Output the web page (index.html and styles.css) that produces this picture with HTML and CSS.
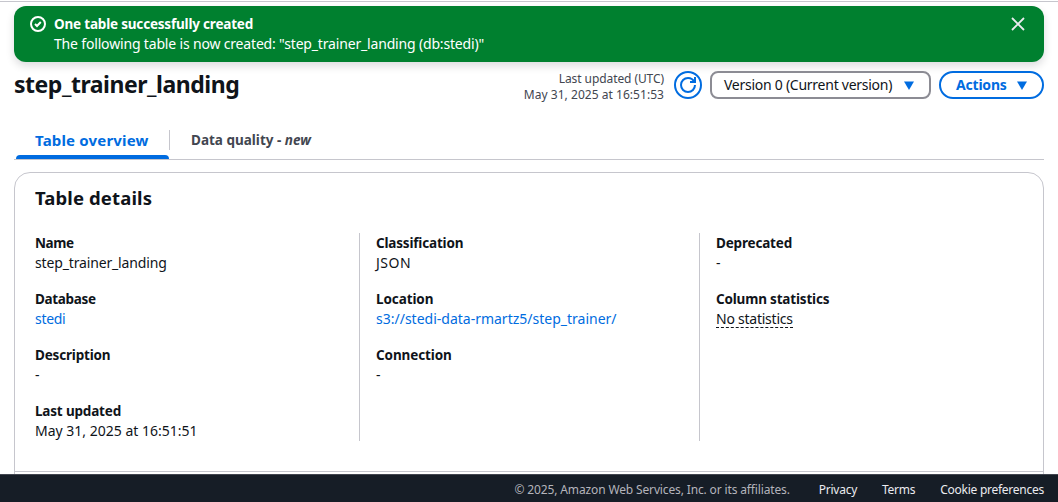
FILE: index.html
```html
<!DOCTYPE html>
<html lang="en">
<head>
<meta charset="utf-8">
<title>step_trainer_landing</title>
<link rel="stylesheet" href="styles.css">
</head>
<body>
<div class="app">
  <main class="main">
    <div class="flash">
      <svg class="flash-icon" viewBox="0 0 16 16"><circle cx="8" cy="8" r="7"/><path d="M5 8l2 2 3.8-4"/></svg>
      <div class="flash-text">
        <div><span class="flash-title">One table successfully created</span></div>
        <div><span class="flash-body">The following table is now created: "step_trainer_landing (db:stedi)"</span></div>
      </div>
      <svg class="flash-close" viewBox="0 0 16 16"><path d="M2 2l12 12M14 2L2 14"/></svg>
    </div>
    <header class="header">
      <h1 class="title">step_trainer_landing</h1>
      <div class="updated">
        <div class="updated-label">Last updated (UTC)</div>
        <div class="updated-time">May 31, 2025 at 16:51:53</div>
      </div>
      <button class="refresh" aria-label="Refresh"><svg viewBox="0 0 16 16"><path d="M15 8c0 3.87-3.13 7-7 7s-7-3.13-7-7 3.13-7 7-7c2.79 0 5.2 1.63 6.33 4"/><path d="M10 5h5V0"/></svg></button>
      <button class="select"><span class="select-text">Version 0 (Current version)</span><svg class="caret" viewBox="0 0 10 9"><path d="M0 .5h10L5 9z"/></svg></button>
      <button class="actions"><span class="actions-text">Actions</span><svg class="caret" viewBox="0 0 10 9"><path d="M0 .5h10L5 9z"/></svg></button>
    </header>
    <nav class="tabs">
      <a class="tab tab-active">Table overview</a>
      <a class="tab">Data quality - <i>new</i></a>
    </nav>
    <section class="card">
      <h2 class="card-title">Table details</h2>
      <div class="columns">
        <dl class="column">
          <div><dt class="k-name">Name</dt><dd class="v-name">step_trainer_landing</dd></div>
          <div><dt class="k-db">Database</dt><dd><a class="link v-db">stedi</a></dd></div>
          <div><dt>Description</dt><dd>-</dd></div>
          <div><dt>Last updated</dt><dd>May 31, 2025 at 16:51:51</dd></div>
        </dl>
        <dl class="column">
          <div><dt>Classification</dt><dd class="v-class">JSON</dd></div>
          <div><dt class="k-loc">Location</dt><dd><a class="link">s3://stedi-data-rmartz5/step_trainer/</a></dd></div>
          <div><dt class="k-conn">Connection</dt><dd>-</dd></div>
        </dl>
        <dl class="column">
          <div><dt>Deprecated</dt><dd>-</dd></div>
          <div><dt>Column statistics</dt><dd><span class="dashed">No statistics</span></dd></div>
        </dl>
      </div>
      <div class="card-footer"></div>
    </section>
  </main>
  <footer class="footer">
    <span class="copyright">© 2025, Amazon Web Services, Inc. or its affiliates.</span>
    <a>Privacy</a>
    <a>Terms</a>
    <a>Cookie preferences</a>
  </footer>
</div>
</body>
</html>
```
FILE: styles.css
```css
* { box-sizing: border-box; }
body {
  margin: 0;
  background: #fff;
  color: #0f141a;
  font: 14px/20px "Noto Sans", "Open Sans", sans-serif;
  white-space: nowrap;
}
.app { height: 502px; display: flex; flex-direction: column; overflow: hidden; padding-top: 1px; }
.main { flex: 1; min-height: 0; overflow: hidden; border-top: 1px solid #c6c6cd; padding: 4px 14px 0; }
.flash {
  display: flex; height: 56px; padding: 8px 18px 8px 16px;
  border-radius: 12px; background: #00802f; color: #fff;
  box-shadow: 0 4px 8px rgba(0, 7, 22, .14);
}
.flash-icon { width: 16px; height: 16px; margin: 2px 8px 0 0; fill: none; stroke: #fff; stroke-width: 2; }
.flash-text { flex: 1; }
.flash-title { font-weight: 700; font-size: 13.5px; letter-spacing: -.19px; }
.flash-body { letter-spacing: -.17px; }
.flash-close { width: 16px; height: 16px; margin-top: 2px; fill: none; stroke: #ebebf0; stroke-width: 1.8; }
.header { display: flex; align-items: flex-start; margin-top: 9px; height: 59px; }
.title { flex: 1; margin: 0; font-size: 23px; line-height: 27px; letter-spacing: -.47px; }
.updated { margin: 0 10px 0 0; font-size: 12px; line-height: 16px; color: #424650; text-align: right; }
.updated-label { letter-spacing: -.08px; }
.updated-time { letter-spacing: .04px; }
button { height: 28px; background: #fff; font: inherit; color: inherit; display: flex; align-items: center; padding: 0; }
.refresh { width: 28px; border: 2px solid #006ce0; border-radius: 50%; justify-content: center; }
.refresh svg { width: 16px; height: 16px; fill: none; stroke: #006ce0; stroke-width: 2; }
.select { width: 221px; margin: 0 8px; padding: 0 15px 0 12px; border: 2px solid #8c8c94; border-radius: 8px; justify-content: space-between; }
.select-text { letter-spacing: -.26px; }
.actions { width: 105px; padding: 0 15px; border: 2px solid #006ce0; border-radius: 14px; justify-content: space-between; color: #006ce0; font-weight: 700; }
.actions-text { letter-spacing: -.2px; }
.caret { width: 10px; height: 9px; fill: #006ce0; }
.tabs { display: flex; height: 30px; border-bottom: 1px solid #c6c6cd; padding-left: 2px; font-weight: 700; font-size: 13.5px; color: #424650; }
.tab { height: 20px; padding: 0 21px; }
.tab-active { width: 154px; padding: 0 0 0 19px; height: 29px; color: #006ce0; font-size: 15px; letter-spacing: .18px; border-right: 1px solid transparent; background: linear-gradient(#c6c6cd, #c6c6cd) right top / 1px 20px no-repeat border-box; }
.tab-active::after { content: ""; display: block; height: 4px; margin: 5px 0 0 -19px; border-radius: 4px 4px 0 0; background: #006ce0; }
.card { margin-top: 12px; height: 400px; border: 1px solid #c6c6cd; border-radius: 16px; padding-top: 13px; }
.card-title { margin: 0 20px; font-size: 18.5px; line-height: 24px; letter-spacing: .12px; }
.columns { display: grid; grid-template-columns: 344px 340px 1fr; margin-top: 23px; height: 208px; }
.column { margin: 0; padding-left: 16px; border-right: 1px solid #c6c6cd; display: flex; flex-direction: column; gap: 16px; }
.column:first-child { width: 345px; padding-left: 20px; }
.column:nth-child(2) { padding-left: 17px; margin-right: -1px; }
.column:last-child { border-right: 0; padding-left: 17px; }
dt { font-weight: 700; font-size: 13.5px; letter-spacing: -.18px; }
dd { margin: 0; }
.k-name { letter-spacing: -.4px; }
.k-db { letter-spacing: -.33px; }
.k-loc, .k-conn { letter-spacing: -.1px; }
.v-name { letter-spacing: -.15px; }
.v-db { letter-spacing: -.3px; }
.v-class { letter-spacing: .5px; }
.link { color: #006ce0; }
.dashed { display: inline-block; height: 19px; border-bottom: 1px dashed #0f141a; letter-spacing: -.24px; }
.card-footer { margin-top: 30px; border-top: 1px solid #c6c6cd; }
.footer { height: 28px; display: flex; align-items: center; justify-content: flex-end; gap: 25px; padding: 3px 14px 0; background: #161d26; border-top: 1px solid #424650; color: #ebebf0; font-size: 12px; line-height: 16px; letter-spacing: -.26px; }
.copyright { color: #b4b4bb; margin-right: 4px; letter-spacing: -.14px; }
```
